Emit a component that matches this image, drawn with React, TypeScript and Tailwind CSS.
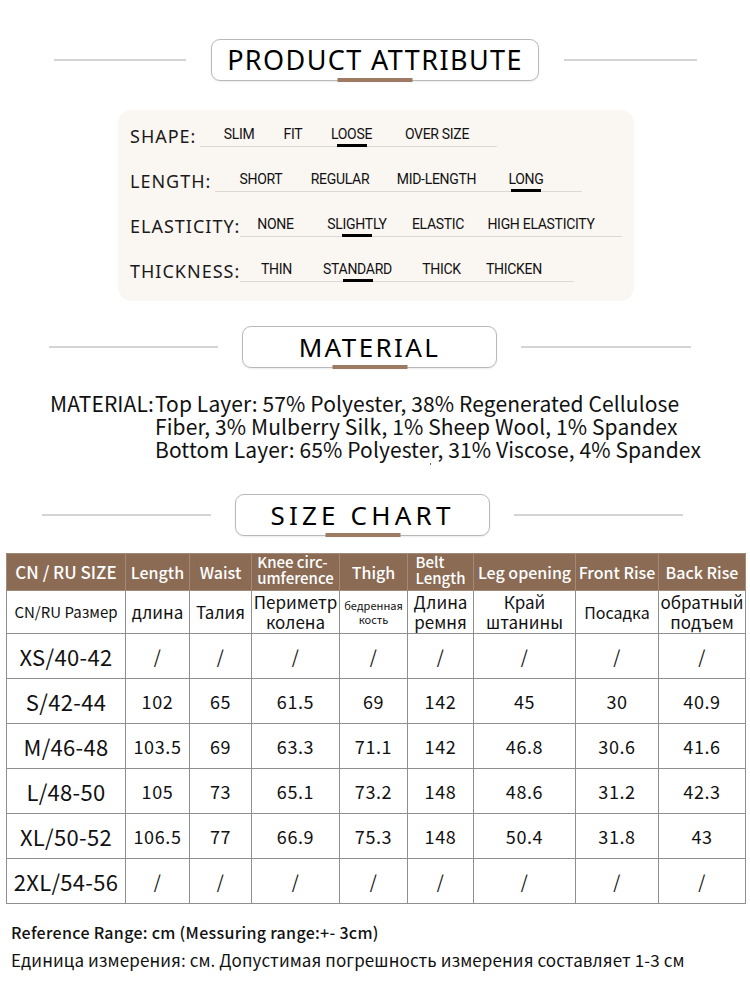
import React from "react";

const cjk = "font-['Noto_Sans_CJK_SC','Noto_Sans',sans-serif]";

type HeadingProps = {
  title: string;
  lead: string;
  leftLine: string;
  boxW: string;
  gap: string;
  rightLine: string;
  textCls: string;
};

function Heading({ title, lead, leftLine, boxW, gap, rightLine, textCls }: HeadingProps) {
  return (
    <div className={`flex items-center ${lead}`}>
      <div className={`h-[2px] bg-[#d4d4d4] ${leftLine}`} />
      <div
        className={`relative flex h-[42px] items-center justify-center rounded-[9px] border border-[#b9b9b9] bg-white shadow-[0_1px_2px_rgba(0,0,0,0.08)] ${boxW} ${gap}`}
      >
        <span className={`font-['Noto_Sans',sans-serif] text-black ${textCls}`}>{title}</span>
        <div className="absolute -bottom-[2px] left-1/2 h-[4px] w-[75px] -translate-x-1/2 bg-[#9c7b62]" />
      </div>
      <div className={`h-[2px] bg-[#d4d4d4] ${rightLine}`} />
    </div>
  );
}

type Opt = { text: string; cls: string; on?: boolean };
type AttrRow = { label: string; labelW: string; lineCls: string; opts: Opt[] };

const attrs: AttrRow[] = [
  {
    label: "SHAPE:",
    labelW: "w-[70px]",
    lineCls: "w-[297px]",
    opts: [
      { text: "SLIM", cls: "ml-[23px] w-[32px]" },
      { text: "FIT", cls: "ml-[29px] w-[18px]" },
      { text: "LOOSE", cls: "ml-[27px] w-[45px]", on: true },
      { text: "OVER SIZE", cls: "ml-[28px] w-[70px]" },
    ],
  },
  {
    label: "LENGTH:",
    labelW: "w-[85px]",
    lineCls: "w-[367px]",
    opts: [
      { text: "SHORT", cls: "ml-[23px] w-[46px]" },
      { text: "REGULAR", cls: "ml-[25px] w-[62px]" },
      { text: "MID-LENGTH", cls: "ml-[23px] w-[85px]" },
      { text: "LONG", cls: "ml-[28px] w-[38px]", on: true },
    ],
  },
  {
    label: "ELASTICITY:",
    labelW: "w-[110px]",
    lineCls: "w-[382px]",
    opts: [
      { text: "NONE", cls: "ml-[16px] w-[39px]" },
      { text: "SLIGHTLY", cls: "ml-[31px] w-[62px]", on: true },
      { text: "ELASTIC", cls: "ml-[24px] w-[52px]" },
      { text: "HIGH ELASTICITY", cls: "ml-[22px] w-[110px]" },
    ],
  },
  {
    label: "THICKNESS:",
    labelW: "w-[110px]",
    lineCls: "w-[334px]",
    opts: [
      { text: "THIN", cls: "ml-[21px] w-[31px]" },
      { text: "STANDARD", cls: "ml-[28px] w-[75px]", on: true },
      { text: "THICK", cls: "ml-[27px] w-[39px]" },
      { text: "THICKEN", cls: "ml-[24px] w-[58px]" },
    ],
  },
];

const headTop: { t: string[]; cls: string }[] = [
  { t: ["CN / RU SIZE"], cls: "text-[17px]" },
  { t: ["Length"], cls: "text-[16px]" },
  { t: ["Waist"], cls: "text-[16px]" },
  { t: ["Knee circ-", "umference"], cls: "text-[15px]" },
  { t: ["Thigh"], cls: "text-[16px]" },
  { t: ["Belt", "Length"], cls: "text-[15px]" },
  { t: ["Leg opening"], cls: "text-[16px]" },
  { t: ["Front Rise"], cls: "text-[16px]" },
  { t: ["Back Rise"], cls: "text-[16px]" },
];

const ruRow: { t: string[]; cls: string }[] = [
  { t: ["CN/RU Размер"], cls: "text-[15px]" },
  { t: ["длина"], cls: "text-[17px]" },
  { t: ["Талия"], cls: "text-[17px]" },
  { t: ["Периметр", "колена"], cls: "text-[17px] leading-[20px]" },
  { t: ["бедренная", "кость"], cls: "text-[11px] leading-[14px]" },
  { t: ["Длина", "ремня"], cls: "text-[17px] leading-[20px]" },
  { t: ["Край", "штанины"], cls: "text-[17px] leading-[20px]" },
  { t: ["Посадка"], cls: "text-[16px]" },
  { t: ["обратный", "подъем"], cls: "text-[17px] leading-[20px]" },
];

const rows: string[][] = [
  ["XS/40-42", "/", "/", "/", "/", "/", "/", "/", "/"],
  ["S/42-44", "102", "65", "61.5", "69", "142", "45", "30", "40.9"],
  ["M/46-48", "103.5", "69", "63.3", "71.1", "142", "46.8", "30.6", "41.6"],
  ["L/48-50", "105", "73", "65.1", "73.2", "148", "48.6", "31.2", "42.3"],
  ["XL/50-52", "106.5", "77", "66.9", "75.3", "148", "50.4", "31.8", "43"],
  ["2XL/54-56", "/", "/", "/", "/", "/", "/", "/", "/"],
];

const colW = [
  "w-[119px]",
  "w-[64px]",
  "w-[62px]",
  "w-[88px]",
  "w-[68px]",
  "w-[66px]",
  "w-[102px]",
  "w-[83px]",
  "w-[87px]",
];

export default function App() {
  return (
    <div className="relative h-[1000px] w-[750px] overflow-hidden bg-white text-black">
      <Heading
        title="PRODUCT ATTRIBUTE"
        lead="pt-[39px] pl-[54px]"
        leftLine="w-[132px]"
        boxW="w-[328px]"
        gap="mx-[25px]"
        rightLine="w-[133px]"
        textCls="text-[27px] tracking-[1.4px]"
      />

      {/* attribute panel */}
      <div className="ml-[118px] mt-[29px] flex h-[191px] w-[516px] flex-col gap-[15px] rounded-[14px] bg-[#faf6f1] pl-[12px] pt-[7px]">
        {attrs.map((r) => (
          <div key={r.label} className="flex h-[30px] items-end">
            <span
              className={`whitespace-nowrap font-['Noto_Sans',sans-serif] text-[18px] leading-[22px] tracking-[1px] text-[#1a1a1a] ${r.labelW}`}
            >
              {r.label}
            </span>
            <div className={`flex items-end border-b border-[#ddd8d1] ${r.lineCls}`}>
              {r.opts.map((o) => (
                <div key={o.text} className={`flex flex-col items-center ${o.cls}`}>
                  <span className="whitespace-nowrap font-['Roboto',sans-serif] text-[14px] leading-[18px] tracking-[-0.3px] text-[#111]">
                    {o.text}
                  </span>
                  <div className={`-mb-[1px] mt-[1px] h-[3px] w-[30px] ${o.on ? "bg-black" : "bg-transparent"}`} />
                </div>
              ))}
            </div>
          </div>
        ))}
      </div>

      <Heading
        title="MATERIAL"
        lead="mt-[25px] pl-[49px]"
        leftLine="w-[169px]"
        boxW="w-[255px]"
        gap="mx-[24px]"
        rightLine="w-[170px]"
        textCls="text-[26px] tracking-[2.4px]"
      />

      {/* material */}
      <div className={`ml-[50px] mt-[24px] flex text-[21px] leading-[23px] tracking-[0.1px] text-[#111] ${cjk}`}>
        <span className="w-[105px] whitespace-nowrap">MATERIAL:</span>
        <div className="flex flex-col">
          <span>Top Layer: 57% Polyester, 38% Regenerated Cellulose</span>
          <span>Fiber, 3% Mulberry Silk, 1% Sheep Wool, 1% Spandex</span>
          <span>Bottom Layer: 65% Polyester, 31% Viscose, 4% Spandex</span>
          <span className="ml-[275px] mt-[2px] h-[2px] w-[1px] bg-[#666]" />
        </div>
      </div>

      <div className="mt-[29px]">
        <Heading
          title="SIZE CHART"
          lead="pl-[42px]"
          leftLine="w-[169px]"
          boxW="w-[255px]"
          gap="mx-[24px]"
          rightLine="w-[169px]"
          textCls="text-[26px] tracking-[4.2px]"
        />
      </div>

      {/* size chart */}
      <table className={`ml-[6px] mt-[17px] w-[739px] table-fixed border-collapse ${cjk}`}>
        <colgroup>
          {colW.map((w, i) => (
            <col key={i} className={w} />
          ))}
        </colgroup>
        <tbody>
          <tr className="h-[37px] bg-[#8b6b54]">
            {headTop.map((c, i) => (
              <td
                key={i}
                className={`border border-[#a08a7a] p-0 text-center align-middle font-medium text-white ${c.cls}`}
              >
                {c.t.length === 1 ? (
                  <span className="whitespace-nowrap leading-[18px]">{c.t[0]}</span>
                ) : (
                  <span className="inline-block text-left leading-[16px]">
                    {c.t[0]}
                    <br />
                    {c.t[1]}
                  </span>
                )}
              </td>
            ))}
          </tr>
          <tr className="h-[43px]">
            {ruRow.map((c, i) => (
              <td
                key={i}
                className={`border border-[#8f8f8f] p-0 text-center align-middle text-[#111] ${c.cls}`}
              >
                {c.t.map((l, j) => (
                  <div key={j} className="whitespace-nowrap">
                    {l}
                  </div>
                ))}
              </td>
            ))}
          </tr>
          {rows.map((r) => (
            <tr key={r[0]} className="h-[45px]">
              {r.map((v, i) => (
                <td
                  key={i}
                  className={`border border-[#8f8f8f] p-0 text-center align-middle text-[#111] ${
                    i === 0 ? "text-[22px] tracking-[0.3px]" : "text-[18px] tracking-[0.6px]"
                  }`}
                >
                  {v}
                </td>
              ))}
            </tr>
          ))}
        </tbody>
      </table>

      {/* notes */}
      <div className={`ml-[11px] mt-[17px] text-[#111] ${cjk}`}>
        <div className="text-[16px] font-medium leading-[22px] tracking-[0.3px]">
          Reference Range: cm (Messuring range:+- 3cm)
        </div>
        <div className="mt-[6px] text-[17px] leading-[22px] tracking-[0.1px]">
          Единица измерения: см. Допустимая погрешность измерения составляет 1-3 см
        </div>
      </div>
    </div>
  );
}
